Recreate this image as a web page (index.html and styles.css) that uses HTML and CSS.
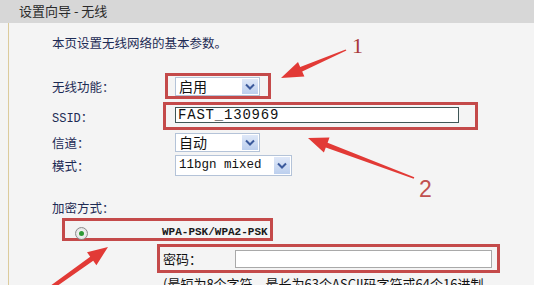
FILE: index.html
```html
<!DOCTYPE html>
<html lang="zh-CN">
<head>
  <meta charset="UTF-8">
  <title>设置向导 - 无线</title>
  <link rel="stylesheet" href="styles.css">
</head>
<body>
  <div class="titlebar">设置向导 - 无线</div>
  <div class="panel">
    <p class="intro">本页设置无线网络的基本参数。</p>

    <div class="row row-func">
      <span class="label">无线功能：</span>
      <div class="mark mark-func">
        <div class="select sel-short"><span class="val">启用</span><span class="drop"><svg width="10" height="7" viewBox="0 0 10 7"><path d="M1 1.5 L5 5.5 L9 1.5" fill="none" stroke="#3b5a9c" stroke-width="2"/></svg></span></div>
      </div>
    </div>

    <div class="row row-ssid">
      <span class="label"><span class="mono">SSID</span>：</span>
      <div class="mark mark-ssid">
        <div class="textbox ssid">FAST_130969</div>
      </div>
    </div>

    <div class="row row-chan">
      <span class="label">信道：</span>
      <div class="select sel-short"><span class="val">自动</span><span class="drop"><svg width="10" height="7" viewBox="0 0 10 7"><path d="M1 1.5 L5 5.5 L9 1.5" fill="none" stroke="#3b5a9c" stroke-width="2"/></svg></span></div>
    </div>

    <div class="row row-mode">
      <span class="label">模式：</span>
      <div class="select sel-wide"><span class="val mono-val">11bgn mixed</span><span class="drop"><svg width="10" height="7" viewBox="0 0 10 7"><path d="M1 1.5 L5 5.5 L9 1.5" fill="none" stroke="#3b5a9c" stroke-width="2"/></svg></span></div>
    </div>

    <p class="sect">加密方式：</p>
    <div class="mark mark-wpa">
      <span class="radio"><span class="dot"></span></span>
      <span class="wpa">WPA-PSK/WPA2-PSK</span>
    </div>
    <div class="mark mark-pass">
      <span class="plabel">密码：</span>
      <span class="textbox pass"></span>
    </div>
    <p class="note">(最短为8个字符，最长为63个ASCII码字符或64个16进制</p>
  </div>

  <!-- annotation arrows drawn over the screenshot -->
  <svg class="annot" width="534" height="285" viewBox="0 0 534 285">
    <polygon points="345.6,49.4 300.2,67.0 298.0,62.0 281,78 304.4,76.6 302.2,71.6 346.4,50.6" fill="#e23a36"/>
    <polygon points="414.3,177.2 327.6,142.7 329.5,137.6 308,138 323.9,152.5 325.8,147.4 413.7,178.8" fill="#e23a36"/>
    <polygon points="49.2,291.6 93.2,260.7 96.4,265.2 108,247 87.0,252.2 90.2,256.7 46.8,288.4" fill="#e23a36"/>
    <text x="352" y="53" class="num num1">1</text>
    <text x="419" y="197" class="num num2">2</text>
  </svg>
</body>
</html>
```

FILE: styles.css
```css
body {
  margin: 0;
  width: 534px;
  height: 285px;
  overflow: hidden;
  position: relative;
  background: #f4f4f4;
  font-family: "Noto Sans CJK SC", "Liberation Sans", sans-serif;
  font-size: 12px;
  color: #1d2b55;
}
.titlebar {
  height: 23px;
  line-height: 21px;
  padding-left: 19px;
  background: #d7d7d7;
  color: #2a2a2a;
  font-size: 13px;
}
.panel {
  margin-left: 8px;
  border-left: 1px solid #dccb9c;
  padding: 12px 0 0 43px;
  height: 262px;
  box-sizing: border-box;
}
.intro {
  margin: 0;
  line-height: 16px;
  font-size: 12.5px;
}
.row {
  display: flex;
  align-items: center;
}
.label {
  width: 111px;
  flex: none;
  font-size: 12.5px;
}
.mono {
  font-family: "Liberation Mono", monospace;
  font-size: 12px;
}
.mark {
  border: 3px solid #c44a4a;
  box-sizing: border-box;
  display: flex;
}
.row-func {
  margin-top: 22px;
  height: 26px;
}
.mark-func {
  margin-left: 2px;
  width: 106px;
  height: 26px;
  padding: 0 8px 0 7px;
  align-items: center;
}
.select {
  display: flex;
  align-items: stretch;
  background: #fff;
  border: 1px solid #b4c3d8;
  box-sizing: border-box;
}
.sel-short {
  width: 85px;
  height: 19px;
}
.sel-wide {
  width: 117px;
  height: 21px;
}
.val {
  flex: 1;
  padding-left: 3px;
  font-size: 14px;
  line-height: 17px;
  color: #111;
}
.mono-val {
  font-family: "Liberation Mono", monospace;
  font-size: 12.5px;
  line-height: 19px;
}
.drop {
  width: 16px;
  margin: 1px;
  display: flex;
  align-items: center;
  justify-content: center;
  background: linear-gradient(#dfe8f8, #bccfee);
}
.row-ssid {
  margin-top: 3px;
  height: 28px;
}
.mark-ssid {
  width: 315px;
  height: 28px;
  padding: 2px 0 0 9px;
  align-items: flex-start;
}
.textbox {
  display: block;
  background: #fff;
  box-sizing: border-box;
}
.ssid {
  width: 284px;
  height: 16px;
  border: 1px solid #3f5656;
  font-family: "Liberation Mono", monospace;
  font-size: 14px;
  letter-spacing: 0.8px;
  line-height: 14px;
  padding-left: 2px;
  color: #111;
}
.row-chan {
  margin-top: 2px;
  height: 20px;
}
.row-mode {
  margin-top: 2px;
  height: 22px;
}
.row-chan .select,
.row-mode .select {
  margin-left: 12px;
}
.sect {
  margin: 24px 0 0;
  line-height: 16px;
  font-size: 12.5px;
}
.mark-wpa {
  margin: 2px 0 0 10px;
  width: 211px;
  height: 23px;
  padding-top: 5px;
  align-items: center;
}
.radio {
  margin: 3px 0 0 10px;
  width: 13px;
  height: 13px;
  border: 1px solid #8c8c8c;
  border-radius: 50%;
  box-sizing: border-box;
  background: radial-gradient(#ffffff, #d8d8d8);
  display: flex;
  align-items: center;
  justify-content: center;
}
.dot {
  width: 5px;
  height: 5px;
  border-radius: 50%;
  background: #2f9a36;
}
.wpa {
  margin-left: 74px;
  font-family: "Liberation Mono", monospace;
  font-size: 11px;
  font-weight: bold;
  color: #1a1a1a;
}
.mark-pass {
  margin: 3px 0 0 105px;
  width: 343px;
  height: 29px;
  padding-left: 3px;
  align-items: center;
}
.plabel {
  width: 72px;
  font-size: 13px;
  color: #111;
}
.pass {
  width: 257px;
  height: 18px;
  border: 1px solid #a9a9a9;
}
.note {
  margin: 3px 0 0 111px;
  font-size: 13px;
  line-height: 16px;
  white-space: nowrap;
  color: #111;
}
.annot {
  position: absolute;
  left: 0;
  top: 0;
  pointer-events: none;
}
.num {
  fill: #a83a3a;
}
.num1 {
  font-family: "Liberation Serif", serif;
  font-size: 22px;
}
.num2 {
  font-family: "Liberation Sans", sans-serif;
  font-size: 23px;
  fill: #c0504f;
}
```
